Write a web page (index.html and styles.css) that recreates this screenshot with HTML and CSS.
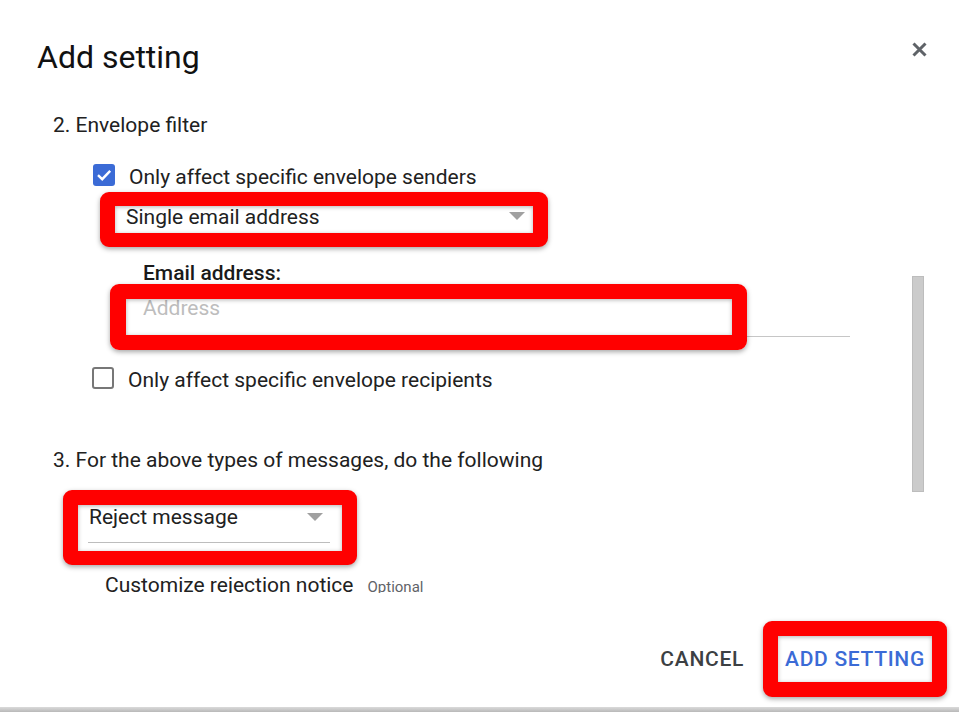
FILE: index.html
```html
<!DOCTYPE html>
<html lang="en">
<head>
<meta charset="utf-8">
<title>Add setting</title>
<link rel="stylesheet" href="styles.css">
</head>
<body>
<div class="dialog">
  <header class="header">
    <h1 class="title">Add setting</h1>
    <button class="close" aria-label="Close">
      <svg width="15" height="15" viewBox="0 0 15 15"><path d="M1.5 1.5L13.5 13.5M13.5 1.5L1.5 13.5" stroke="#5f6368" stroke-width="3" fill="none"/></svg>
    </button>
  </header>
  <div class="body">
    <div class="content">
      <div class="section-title">2. Envelope filter</div>
      <div class="check-row row-senders">
        <span class="cb cb-checked"><svg width="22" height="22" viewBox="0 0 22 22"><path d="M5 11.2L9.2 15.2L17.2 6.8" stroke="#fff" stroke-width="2.4" fill="none"/></svg></span>
        <span class="cb-label">Only affect specific envelope senders</span>
      </div>
      <div class="mark mark-sender">
        <div class="select select-sender">
          <span>Single email address</span>
          <svg class="arrow" width="16" height="8" viewBox="0 0 16 8"><polygon points="0,0 16,0 8,8" fill="#a0a0a0"/></svg>
        </div>
      </div>
      <div class="field-label">Email address:</div>
      <div class="field">
        <span class="placeholder">Address</span>
        <div class="field-mark"></div>
      </div>
      <div class="check-row row-recipients">
        <span class="cb cb-empty"></span>
        <span class="cb-label">Only affect specific envelope recipients</span>
      </div>
      <div class="section-title section-action">3. For the above types of messages, do the following</div>
      <div class="mark mark-action">
        <div class="select select-action">
          <span>Reject message</span>
          <svg class="arrow" width="16" height="8" viewBox="0 0 16 8"><polygon points="0,0 16,0 8,8" fill="#a0a0a0"/></svg>
        </div>
      </div>
      <div class="notice">
        <span>Customize rejection notice</span>
        <span class="optional">Optional</span>
      </div>
    </div>
    <div class="scrollbar"><div class="thumb"></div></div>
  </div>
  <footer class="footer">
    <button class="btn cancel">CANCEL</button>
    <div class="mark mark-btn"><button class="btn primary">ADD SETTING</button></div>
  </footer>
</div>
<div class="strip"></div>
</body>
</html>
```
FILE: styles.css
```css
* { box-sizing: border-box; }
html, body { margin: 0; padding: 0; }
body {
  width: 959px;
  height: 712px;
  overflow: hidden;
  background: #fff;
  font-family: Roboto, "Noto Sans", "Liberation Sans", sans-serif;
  color: #202124;
}
.dialog {
  height: 707px;
  display: flex;
  flex-direction: column;
}
.header {
  flex: none;
  height: 75px;
  padding-top: 39px;
  display: flex;
  justify-content: space-between;
  align-items: flex-start;
}
.title {
  margin: 0 0 0 37px;
  font-size: 32px;
  font-weight: 400;
  line-height: 36px;
  color: #111;
}
.close {
  margin: 3px 32px 0 0;
  width: 15px;
  height: 15px;
  padding: 0;
  border: 0;
  background: none;
  display: block;
}
.close svg { display: block; }
.body {
  flex: none;
  height: 518px;
  overflow: hidden;
  display: flex;
}
.content {
  width: 912px;
  padding-top: 38px;
  font-size: 21px;
  line-height: 25px;
  color: #212121;
}
.scrollbar {
  width: 12px;
  padding-top: 201px;
}
.thumb {
  height: 216px;
  background: #cbcbcb;
  border: 1px solid #bdbdbd;
}
.section-title { margin-left: 53px; }
.section-action { margin-top: 55px; }
.check-row {
  display: flex;
  align-items: flex-start;
}
.row-senders { margin: 25px 0 0 93px; }
.row-recipients { margin: 29px 0 0 92px; }
.cb {
  flex: none;
  width: 22px;
  height: 22px;
  margin-top: 1px;
  border-radius: 3px;
}
.cb svg { display: block; }
.cb-checked { background: #3b6bd6; }
.cb-empty { border: 2px solid #777; }
.cb-label { margin: 2px 0 0 14px; }
.mark {
  border: 15px solid #ff0000;
  border-radius: 9px;
  background: #fff;
  box-shadow: 0 2px 5px rgba(0, 0, 0, 0.35), inset 0 1px 4px rgba(0, 0, 0, 0.3);
}
.mark-sender {
  margin: 2px 0 0 100px;
  width: 448px;
  border-width: 14px 15px;
}
.select {
  display: flex;
  justify-content: space-between;
  align-items: flex-start;
}
.arrow { display: block; flex: none; }
.select-sender {
  height: 27px;
  padding: 0 8px 0 11px;
  line-height: 23px;
}
.select-sender .arrow { margin-top: 6px; }
.field-label {
  margin: 14px 0 0 143px;
  font-weight: 500;
  color: #1a1a1a;
}
.field {
  position: relative;
  margin: 10px 0 0 143px;
  width: 707px;
  height: 41px;
  border-bottom: 1px solid #c6c6c6;
}
.placeholder {
  display: block;
  color: #bdbdbd;
}
.field-mark {
  position: absolute;
  left: -33px;
  top: -12px;
  width: 637px;
  height: 66px;
  border: 15px solid #ff0000;
  border-left-width: 16px;
  border-radius: 9px;
  box-shadow: 0 2px 5px rgba(0, 0, 0, 0.35), inset 0 1px 4px rgba(0, 0, 0, 0.3);
}
.mark-action {
  margin: 17px 0 0 63px;
  width: 294px;
  border-width: 15px 15px 14px;
}
.select-action {
  margin: 0 12px 8px 10px;
  height: 38px;
  padding: 0 7px 0 1px;
  border-bottom: 1px solid #bdbdbd;
}
.select-action .arrow { margin-top: 8px; }
.notice {
  margin: 8px 0 0 105px;
  display: flex;
  align-items: baseline;
}
.optional {
  margin-left: 14px;
  font-size: 15px;
  color: #5f6368;
}
.footer {
  flex: 1;
  padding: 28px 12px 0 0;
  display: flex;
  justify-content: flex-end;
  align-items: flex-start;
}
.btn {
  font-family: inherit;
  font-size: 21px;
  font-weight: 500;
  line-height: 25px;
  letter-spacing: 0.7px;
  border: 0;
  background: none;
  padding: 0;
  cursor: pointer;
}
.cancel {
  margin: 26px 19px 0 0;
  color: #3c4043;
}
.mark-btn {
  width: 184px;
  height: 76px;
  display: flex;
  align-items: center;
  justify-content: center;
}
.primary { color: #3b6bd6; }
.strip {
  height: 5px;
  background: linear-gradient(#dadada, #b9b9b9);
}
```
